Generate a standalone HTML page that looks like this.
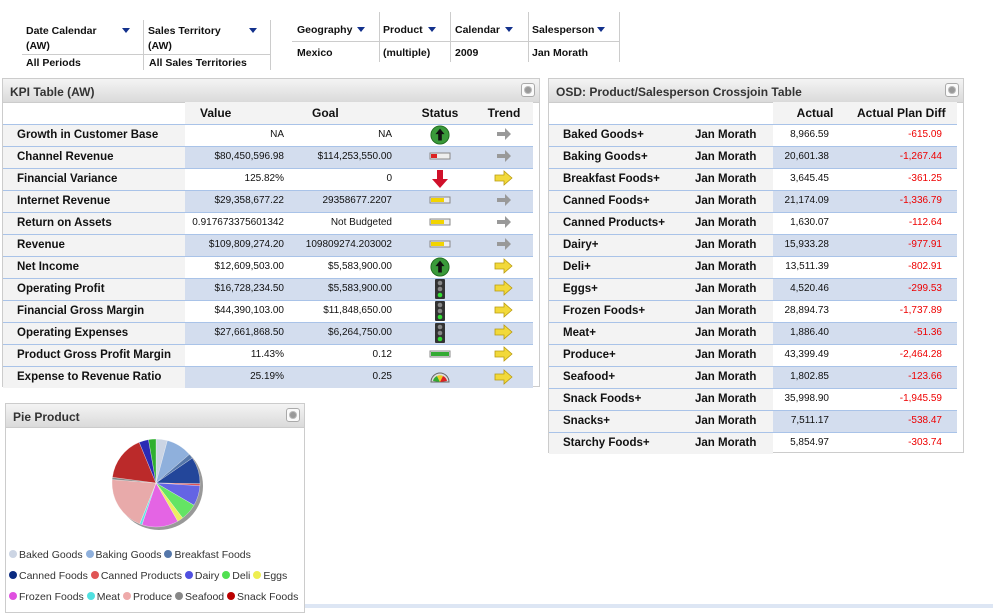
<!DOCTYPE html>
<html><head><meta charset="utf-8"><style>
*{margin:0;padding:0;box-sizing:border-box}
body{width:993px;height:608px;background:#fff;position:relative;overflow:hidden;font-family:"Liberation Sans",Arial,sans-serif;color:#111}
.a{position:absolute}
.f{font-size:10.5px;font-weight:bold;color:#111}
.tri{position:absolute;width:0;height:0;border-left:4px solid transparent;border-right:4px solid transparent;border-top:5px solid #13318c}
.vl{position:absolute;width:1px;background:#ccc}
.hl{position:absolute;height:1px;background:#ccc}
.panel{position:absolute;border:1px solid #ccc;background:#fff}
.ph{height:24px;background:linear-gradient(#f4f4f4,#dadada);border-bottom:1px solid #ccc;font-size:12px;font-weight:bold;color:#333;padding:6px 0 0 7px;position:relative}
.gear{position:absolute;right:4px;top:4px;width:14px;height:14px;border:1px solid #aaa;border-radius:3px;background:#fafafa}
.gear:after{content:"";position:absolute;left:3px;top:3px;width:6px;height:6px;border-radius:50%;background:#999;box-shadow:0 0 0 1px #bbb}
table{border-collapse:collapse;position:absolute;table-layout:fixed}
tr{height:22px}
td{height:22px;max-height:22px;font-size:10px;padding:0;white-space:nowrap;line-height:20px;overflow:hidden}
td svg{vertical-align:middle;display:inline-block}
td.l{background:#f3f3f3;font-weight:bold;font-size:11.5px;padding-left:14px;border-top:1px solid #a9c3e8}
td.d{text-align:right;border-top:1px solid #a9c3e8}
tr.alt td.d{background:#d3ddee}
tr.h td{font-weight:bold;font-size:12px;height:22px;border:none}
tr.h td.g{background:#f3f3f3}
.neg{color:#e00}
.c{text-align:center!important}
.dot{display:inline-block;width:8px;height:8px;border-radius:50%;margin-right:2px;vertical-align:0px}
.leg{font-size:10.5px;color:#333;white-space:nowrap}
</style></head><body>

<div class="a f" style="left:26px;top:24px;line-height:15px">Date Calendar<br>(AW)</div>
<div class="tri" style="left:122px;top:28px"></div>
<div class="a f" style="left:148px;top:24px;line-height:15px">Sales Territory<br>(AW)</div>
<div class="tri" style="left:249px;top:28px"></div>
<div class="hl" style="left:22px;top:54px;width:248px"></div>
<div class="vl" style="left:143px;top:20px;height:50px"></div>
<div class="vl" style="left:270px;top:20px;height:50px"></div>
<div class="a f" style="left:26px;top:57px">All Periods</div>
<div class="a f" style="left:149px;top:57px">All Sales Territories</div>

<div class="a f" style="left:297px;top:24px">Geography</div><div class="tri" style="left:357px;top:27px"></div>
<div class="a f" style="left:383px;top:24px">Product</div><div class="tri" style="left:428px;top:27px"></div>
<div class="a f" style="left:455px;top:24px">Calendar</div><div class="tri" style="left:505px;top:27px"></div>
<div class="a f" style="left:532px;top:24px">Salesperson</div><div class="tri" style="left:597px;top:27px"></div>
<div class="hl" style="left:292px;top:41px;width:327px"></div>
<div class="vl" style="left:379px;top:12px;height:50px"></div>
<div class="vl" style="left:450px;top:12px;height:50px"></div>
<div class="vl" style="left:528px;top:12px;height:50px"></div>
<div class="vl" style="left:619px;top:12px;height:50px"></div>
<div class="a f" style="left:297px;top:47px">Mexico</div>
<div class="a f" style="left:383px;top:47px">(multiple)</div>
<div class="a f" style="left:455px;top:47px">2009</div>
<div class="a f" style="left:532px;top:47px">Jan Morath</div>

<div class="panel" style="left:2px;top:78px;width:538px;height:309px">
<div class="ph">KPI Table (AW)<div class="gear"></div></div>
</div>
<table style="left:3px;top:102px;width:530px">
<colgroup><col style="width:182px"><col style="width:115px"><col style="width:105px"><col style="width:70px"><col style="width:58px"></colgroup>
<tr class="h"><td></td><td class="g" style="text-align:left;padding-left:15px">Value</td><td class="g" style="padding-left:12px">Goal</td><td class="g c">Status</td><td class="g c">Trend</td></tr>
<tr><td class="l">Growth in Customer Base</td><td class="d" style="padding-right:16px">NA</td><td class="d" style="padding-right:13px">NA</td><td class="d c"><svg width="20" height="20" viewBox="0 0 22 22"><circle cx="11" cy="11" r="10" fill="#3a9a3a" stroke="#1f6a1f"/><path d="M11 4 L16 10 L13 10 L13 17 L9 17 L9 10 L6 10Z" fill="#111"/></svg></td><td class="d c"><svg width="18" height="14"><path d="M2 5h8V1l6 6-6 6V9H2z" fill="#999"/></svg></td></tr>
<tr class="alt"><td class="l">Channel Revenue</td><td class="d" style="padding-right:16px">$80,450,596.98</td><td class="d" style="padding-right:13px">$114,253,550.00</td><td class="d c"><svg width="22" height="8"><rect x="1" y="1" width="20" height="6" fill="#eee" stroke="#888"/><rect x="2" y="2" width="6" height="4" fill="#d22"/></svg></td><td class="d c"><svg width="18" height="14"><path d="M2 5h8V1l6 6-6 6V9H2z" fill="#999"/></svg></td></tr>
<tr><td class="l">Financial Variance</td><td class="d" style="padding-right:16px">125.82%</td><td class="d" style="padding-right:13px">0</td><td class="d c"><svg width="18" height="20"><path d="M6 1h6v9h5L9 19 1 10h5z" fill="#d0102a"/></svg></td><td class="d c"><svg width="20" height="16"><path d="M1 5h9V1l8 7-8 7v-4H1z" fill="#f2d93a" stroke="#b89a10" stroke-width=".8"/></svg></td></tr>
<tr class="alt"><td class="l">Internet Revenue</td><td class="d" style="padding-right:16px">$29,358,677.22</td><td class="d" style="padding-right:13px">29358677.2207</td><td class="d c"><svg width="22" height="8"><rect x="1" y="1" width="20" height="6" fill="#eee" stroke="#888"/><rect x="2" y="2" width="13" height="4" fill="#f2d400"/></svg></td><td class="d c"><svg width="18" height="14"><path d="M2 5h8V1l6 6-6 6V9H2z" fill="#999"/></svg></td></tr>
<tr><td class="l">Return on Assets</td><td class="d" style="padding-right:16px">0.917673375601342</td><td class="d" style="padding-right:13px">Not Budgeted</td><td class="d c"><svg width="22" height="8"><rect x="1" y="1" width="20" height="6" fill="#eee" stroke="#888"/><rect x="2" y="2" width="13" height="4" fill="#f2d400"/></svg></td><td class="d c"><svg width="18" height="14"><path d="M2 5h8V1l6 6-6 6V9H2z" fill="#999"/></svg></td></tr>
<tr class="alt"><td class="l">Revenue</td><td class="d" style="padding-right:16px">$109,809,274.20</td><td class="d" style="padding-right:13px">109809274.203002</td><td class="d c"><svg width="22" height="8"><rect x="1" y="1" width="20" height="6" fill="#eee" stroke="#888"/><rect x="2" y="2" width="13" height="4" fill="#f2d400"/></svg></td><td class="d c"><svg width="18" height="14"><path d="M2 5h8V1l6 6-6 6V9H2z" fill="#999"/></svg></td></tr>
<tr><td class="l">Net Income</td><td class="d" style="padding-right:16px">$12,609,503.00</td><td class="d" style="padding-right:13px">$5,583,900.00</td><td class="d c"><svg width="20" height="20" viewBox="0 0 22 22"><circle cx="11" cy="11" r="10" fill="#3a9a3a" stroke="#1f6a1f"/><path d="M11 4 L16 10 L13 10 L13 17 L9 17 L9 10 L6 10Z" fill="#111"/></svg></td><td class="d c"><svg width="20" height="16"><path d="M1 5h9V1l8 7-8 7v-4H1z" fill="#f2d93a" stroke="#b89a10" stroke-width=".8"/></svg></td></tr>
<tr class="alt"><td class="l">Operating Profit</td><td class="d" style="padding-right:16px">$16,728,234.50</td><td class="d" style="padding-right:13px">$5,583,900.00</td><td class="d c"><svg width="10" height="20"><rect x="0" y="0" width="10" height="20" rx="1" fill="#333"/><circle cx="5" cy="4" r="2.3" fill="#888"/><circle cx="5" cy="10" r="2.3" fill="#888"/><circle cx="5" cy="16" r="2.3" fill="#3d3"/></svg></td><td class="d c"><svg width="20" height="16"><path d="M1 5h9V1l8 7-8 7v-4H1z" fill="#f2d93a" stroke="#b89a10" stroke-width=".8"/></svg></td></tr>
<tr><td class="l">Financial Gross Margin</td><td class="d" style="padding-right:16px">$44,390,103.00</td><td class="d" style="padding-right:13px">$11,848,650.00</td><td class="d c"><svg width="10" height="20"><rect x="0" y="0" width="10" height="20" rx="1" fill="#333"/><circle cx="5" cy="4" r="2.3" fill="#888"/><circle cx="5" cy="10" r="2.3" fill="#888"/><circle cx="5" cy="16" r="2.3" fill="#3d3"/></svg></td><td class="d c"><svg width="20" height="16"><path d="M1 5h9V1l8 7-8 7v-4H1z" fill="#f2d93a" stroke="#b89a10" stroke-width=".8"/></svg></td></tr>
<tr class="alt"><td class="l">Operating Expenses</td><td class="d" style="padding-right:16px">$27,661,868.50</td><td class="d" style="padding-right:13px">$6,264,750.00</td><td class="d c"><svg width="10" height="20"><rect x="0" y="0" width="10" height="20" rx="1" fill="#333"/><circle cx="5" cy="4" r="2.3" fill="#888"/><circle cx="5" cy="10" r="2.3" fill="#888"/><circle cx="5" cy="16" r="2.3" fill="#3d3"/></svg></td><td class="d c"><svg width="20" height="16"><path d="M1 5h9V1l8 7-8 7v-4H1z" fill="#f2d93a" stroke="#b89a10" stroke-width=".8"/></svg></td></tr>
<tr><td class="l">Product Gross Profit Margin</td><td class="d" style="padding-right:16px">11.43%</td><td class="d" style="padding-right:13px">0.12</td><td class="d c"><svg width="22" height="8"><rect x="1" y="1" width="20" height="6" fill="#eee" stroke="#888"/><rect x="2" y="2" width="18" height="4" fill="#3a3"/></svg></td><td class="d c"><svg width="20" height="16"><path d="M1 5h9V1l8 7-8 7v-4H1z" fill="#f2d93a" stroke="#b89a10" stroke-width=".8"/></svg></td></tr>
<tr class="alt"><td class="l">Expense to Revenue Ratio</td><td class="d" style="padding-right:16px">25.19%</td><td class="d" style="padding-right:13px">0.25</td><td class="d c"><svg width="22" height="12"><path d="M2 11A9 9 0 0 1 20 11z" fill="#ddd" stroke="#666"/><path d="M4 10A7 7 0 0 1 8 5L11 11z" fill="#3a3"/><path d="M8 5A7 7 0 0 1 14 5L11 11z" fill="#ec2"/><path d="M14 5A7 7 0 0 1 18 10L11 11z" fill="#d22"/></svg></td><td class="d c"><svg width="20" height="16"><path d="M1 5h9V1l8 7-8 7v-4H1z" fill="#f2d93a" stroke="#b89a10" stroke-width=".8"/></svg></td></tr>
</table>

<div class="panel" style="left:548px;top:78px;width:416px;height:375px">
<div class="ph">OSD: Product/Salesperson Crossjoin Table<div class="gear"></div></div>
</div>
<table style="left:549px;top:102px;width:408px">
<colgroup><col style="width:134px"><col style="width:90px"><col style="width:84px"><col style="width:100px"></colgroup>
<tr class="h"><td></td><td></td><td class="g c">Actual</td><td class="g" style="text-align:right;padding-right:13px">Actual Plan Diff</td></tr>
<tr><td class="l">Baked Goods+</td><td class="l" style="padding-left:12px">Jan Morath</td><td class="d" style="padding-right:28px">8,966.59</td><td class="d neg" style="padding-right:15px">-615.09</td></tr>
<tr class="alt"><td class="l">Baking Goods+</td><td class="l" style="padding-left:12px">Jan Morath</td><td class="d" style="padding-right:28px">20,601.38</td><td class="d neg" style="padding-right:15px">-1,267.44</td></tr>
<tr><td class="l">Breakfast Foods+</td><td class="l" style="padding-left:12px">Jan Morath</td><td class="d" style="padding-right:28px">3,645.45</td><td class="d neg" style="padding-right:15px">-361.25</td></tr>
<tr class="alt"><td class="l">Canned Foods+</td><td class="l" style="padding-left:12px">Jan Morath</td><td class="d" style="padding-right:28px">21,174.09</td><td class="d neg" style="padding-right:15px">-1,336.79</td></tr>
<tr><td class="l">Canned Products+</td><td class="l" style="padding-left:12px">Jan Morath</td><td class="d" style="padding-right:28px">1,630.07</td><td class="d neg" style="padding-right:15px">-112.64</td></tr>
<tr class="alt"><td class="l">Dairy+</td><td class="l" style="padding-left:12px">Jan Morath</td><td class="d" style="padding-right:28px">15,933.28</td><td class="d neg" style="padding-right:15px">-977.91</td></tr>
<tr><td class="l">Deli+</td><td class="l" style="padding-left:12px">Jan Morath</td><td class="d" style="padding-right:28px">13,511.39</td><td class="d neg" style="padding-right:15px">-802.91</td></tr>
<tr class="alt"><td class="l">Eggs+</td><td class="l" style="padding-left:12px">Jan Morath</td><td class="d" style="padding-right:28px">4,520.46</td><td class="d neg" style="padding-right:15px">-299.53</td></tr>
<tr><td class="l">Frozen Foods+</td><td class="l" style="padding-left:12px">Jan Morath</td><td class="d" style="padding-right:28px">28,894.73</td><td class="d neg" style="padding-right:15px">-1,737.89</td></tr>
<tr class="alt"><td class="l">Meat+</td><td class="l" style="padding-left:12px">Jan Morath</td><td class="d" style="padding-right:28px">1,886.40</td><td class="d neg" style="padding-right:15px">-51.36</td></tr>
<tr><td class="l">Produce+</td><td class="l" style="padding-left:12px">Jan Morath</td><td class="d" style="padding-right:28px">43,399.49</td><td class="d neg" style="padding-right:15px">-2,464.28</td></tr>
<tr class="alt"><td class="l">Seafood+</td><td class="l" style="padding-left:12px">Jan Morath</td><td class="d" style="padding-right:28px">1,802.85</td><td class="d neg" style="padding-right:15px">-123.66</td></tr>
<tr><td class="l">Snack Foods+</td><td class="l" style="padding-left:12px">Jan Morath</td><td class="d" style="padding-right:28px">35,998.90</td><td class="d neg" style="padding-right:15px">-1,945.59</td></tr>
<tr class="alt"><td class="l">Snacks+</td><td class="l" style="padding-left:12px">Jan Morath</td><td class="d" style="padding-right:28px">7,511.17</td><td class="d neg" style="padding-right:15px">-538.47</td></tr>
<tr><td class="l">Starchy Foods+</td><td class="l" style="padding-left:12px">Jan Morath</td><td class="d" style="padding-right:28px">5,854.97</td><td class="d neg" style="padding-right:15px">-303.74</td></tr>
</table>

<div class="panel" style="left:5px;top:403px;width:300px;height:210px">
<div class="ph">Pie Product<div class="gear"></div></div>
</div>
<svg class="a" style="left:0;top:0" width="310" height="608">
<circle cx="159" cy="486" r="44" fill="#999"/>
<g stroke="#fff" stroke-width="0.3">
<path d="M156 483L156 439A44 44 0 0 1 167.4 440.5Z" fill="#ccd5e4"/>
<path d="M156 483L167.4 440.5A44 44 0 0 1 189.4 454.4Z" fill="#8fb0dc"/>
<path d="M156 483L189.4 454.4A44 44 0 0 1 192.3 458.1Z" fill="#5577aa"/>
<path d="M156 483L192.3 458.1A44 44 0 0 1 200 483.7Z" fill="#23469a"/>
<path d="M156 483L200 483.7A44 44 0 0 1 199.9 485.8Z" fill="#e05555"/>
<path d="M156 483L199.9 485.8A44 44 0 0 1 194 505.2Z" fill="#6464e4"/>
<path d="M156 483L194 505.2A44 44 0 0 1 182.6 518Z" fill="#64e464"/>
<path d="M156 483L182.6 518A44 44 0 0 1 177.7 521.3Z" fill="#eeee60"/>
<path d="M156 483L177.7 521.3A44 44 0 0 1 142 524.7Z" fill="#e464e4"/>
<path d="M156 483L142 524.7A44 44 0 0 1 139.7 523.9Z" fill="#64e4e4"/>
<path d="M156 483L139.7 523.9A44 44 0 0 1 112.1 479.6Z" fill="#e8aaaa"/>
<path d="M156 483L112.1 479.6A44 44 0 0 1 112.4 477.3Z" fill="#888"/>
<path d="M156 483L112.4 477.3A44 44 0 0 1 139.2 442.3Z" fill="#bb2a2a"/>
<path d="M156 483L139.2 442.3A44 44 0 0 1 148.5 439.6Z" fill="#2a2ab4"/>
<path d="M156 483L148.5 439.6A44 44 0 0 1 156 439Z" fill="#30b030"/>
</g>
</svg>
<div class="a leg" style="left:9px;top:549px"><span class="dot" style="background:#ccd5e4"></span>Baked Goods <span class="dot" style="background:#8fb0dc"></span>Baking Goods <span class="dot" style="background:#5577aa"></span>Breakfast Foods</div>
<div class="a leg" style="left:9px;top:570px"><span class="dot" style="background:#0a2a80"></span>Canned Foods <span class="dot" style="background:#e05555"></span>Canned Products <span class="dot" style="background:#5050e0"></span>Dairy <span class="dot" style="background:#50e050"></span>Deli <span class="dot" style="background:#eeee50"></span>Eggs</div>
<div class="a leg" style="left:9px;top:591px"><span class="dot" style="background:#e050e0"></span>Frozen Foods <span class="dot" style="background:#50e0e0"></span>Meat <span class="dot" style="background:#eeaaaa"></span>Produce <span class="dot" style="background:#888"></span>Seafood <span class="dot" style="background:#b00"></span>Snack Foods</div>
<div class="a" style="left:305px;top:604px;width:688px;height:4px;background:#dde6f4"></div>
</body></html>
